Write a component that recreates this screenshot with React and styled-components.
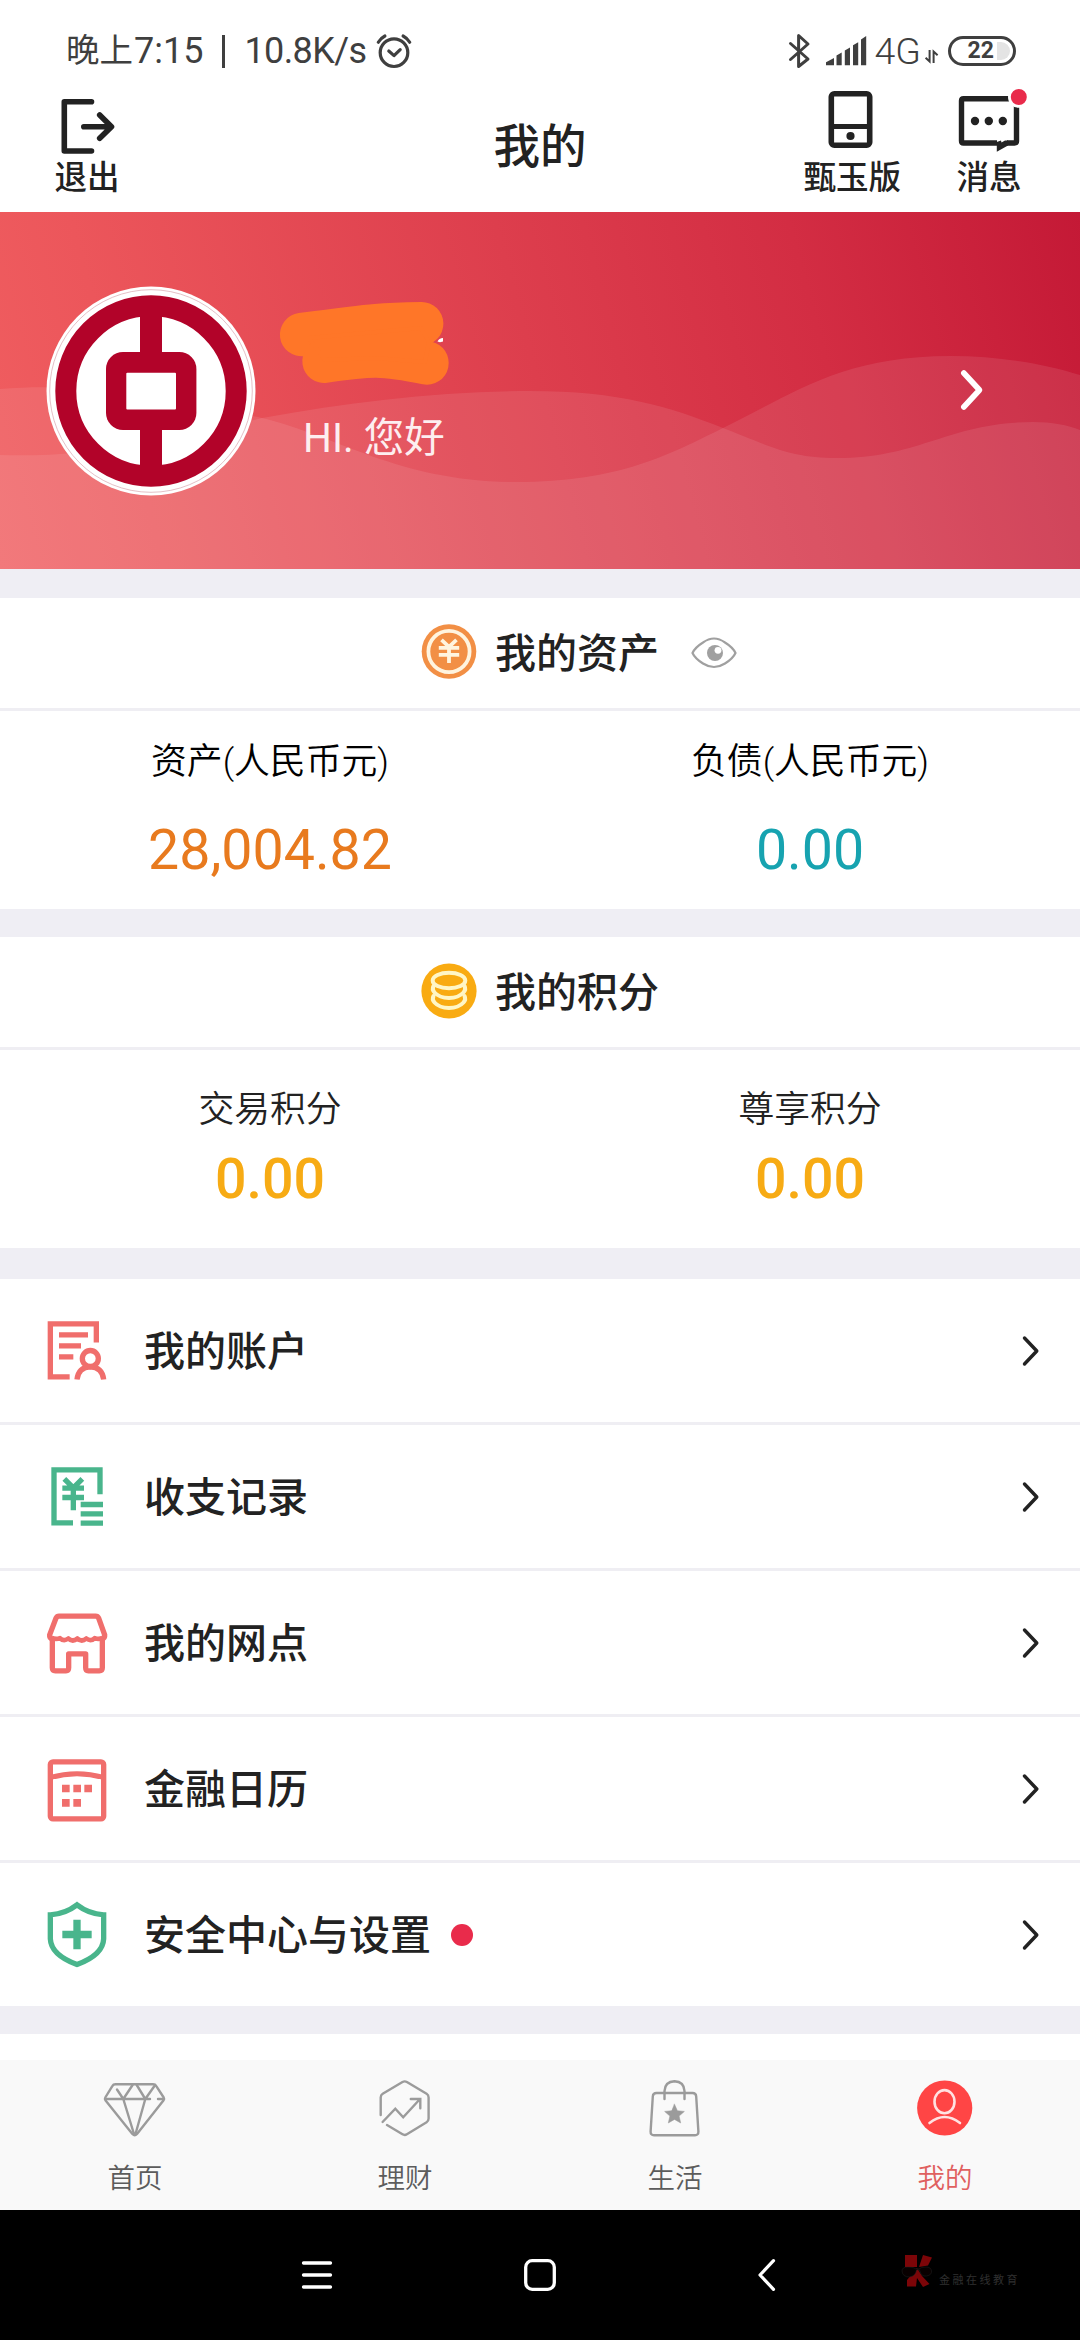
import React from 'react';
import styled, { createGlobalStyle } from 'styled-components';

const GlobalStyle = createGlobalStyle`
  * {
    box-sizing: border-box;
  }

  body {
    margin: 0;
    background: #fff;
    font-family: Roboto, 'Noto Sans CJK SC', sans-serif;
    color: #222;
  }

  svg {
    display: block;
    flex-shrink: 0;
    overflow: visible;
  }
`;

const Screen = styled.div`
  width: 1080px;
  height: 2340px;
  display: flex;
  flex-direction: column;
  background: #fff;
  overflow: hidden;
  white-space: nowrap;
`;

/* ---------- status bar ---------- */

const StatusBar = styled.div`
  height: 84px;
  padding: 18px 64px 0 66px;
  display: flex;
  justify-content: space-between;
  align-items: center;
  color: #3f3f3f;
`;

const StatusGroup = styled.div`
  display: flex;
  align-items: center;
  height: 40px;
`;

const StatusText = styled.span`
  font-size: ${props => props.$size || 35}px;
  font-weight: ${props => props.$weight || 400};
  line-height: 40px;
  letter-spacing: ${props => props.$spacing || 0}px;
  margin-left: ${props => props.$left || 0}px;
`;

const StatusDivider = styled.span`
  width: 3px;
  height: 33px;
  margin: 0 19px 0 19px;
  background: #3f3f3f;
`;

const Battery = styled.div`
  position: relative;
  width: 68px;
  height: 30px;
  margin-left: 10px;
  border: 3px solid #3f3f3f;
  border-radius: 15px;
  display: flex;
  align-items: center;
  justify-content: flex-end;
  padding-right: 3px;
  font-size: 23px;
  font-weight: 700;
  line-height: 24px;
`;

const BatteryRest = styled.span`
  width: 13px;
  height: 18px;
  margin-left: 3px;
  background: #e4e4e4;
  border-radius: 0 9px 9px 0;
`;

/* ---------- header ---------- */

const Header = styled.header`
  height: 128px;
  padding: 0 55px 0 51px;
  display: grid;
  grid-template-columns: 1fr auto 1fr;
`;

const HeaderSide = styled.div`
  display: flex;
  justify-content: ${props => (props.$right ? 'flex-end' : 'flex-start')};
  gap: 52px;
`;

const HeaderButton = styled.div`
  padding-top: 4px;
  display: flex;
  flex-direction: column;
  align-items: center;
  font-size: 32.5px;
  font-weight: 500;
  line-height: 40px;
`;

const Title = styled.h1`
  margin: 0;
  padding-left: 4px;
  font-size: 46.5px;
  font-weight: 500;
  line-height: 127px;
`;

/* ---------- banner ---------- */

const Banner = styled.section`
  position: relative;
  height: 357px;
  padding: 0 96px 0 46px;
  display: flex;
  align-items: center;
  background: linear-gradient(75deg, #f05e60 0%, #ec565b 14%, #dd3e4d 50%, #d32d43 75%, #c41936 100%);
`;

const BannerWaves = styled.svg`
  position: absolute;
  inset: 0;
`;

const BannerItem = styled.div`
  position: relative;
`;

const UserInfo = styled(BannerItem)`
  flex: 1;
  margin: -16px 0 0 23px;
`;

const Greeting = styled.div`
  padding: 20px 0 0 24px;
  font-size: 40.5px;
  line-height: 56px;
  color: #fdeef0;
`;

const BannerArrow = styled(BannerItem)`
  margin-top: -2px;
`;

/* ---------- cards ---------- */

const Gap = styled.div`
  height: ${props => props.$height}px;
  background: #efeef4;
`;

const CardHead = styled.div`
  height: 113px;
  border-bottom: 3px solid #efeef3;
  display: flex;
  align-items: center;
  justify-content: center;
`;

const CardTitle = styled.h2`
  margin: 2px 0 0 18px;
  font-size: 41px;
  font-weight: 500;
  line-height: 58px;
`;

const EyeSlot = styled.div`
  width: 0;
  padding-left: 32px;
  margin-right: -32px;
`;

const CardBody = styled.div`
  height: 198px;
  padding-top: ${props => props.$top}px;
  display: grid;
  grid-template-columns: 1fr 1fr;
`;

const Stat = styled.div`
  display: flex;
  flex-direction: column;
  align-items: center;
  gap: ${props => props.$gap}px;
`;

const StatLabel = styled.div`
  font-size: ${props => props.$size}px;
  font-weight: 350;
  line-height: 40px;
  color: ${props => props.$color};
`;

const StatValue = styled.div`
  font-size: 55.5px;
  font-weight: ${props => props.$weight || 400};
  line-height: 60px;
  color: ${props => props.$color};
`;

/* ---------- menu ---------- */

const MenuRow = styled.div`
  height: ${props => (props.$last ? 143 : 146)}px;
  padding: 0 41px 0 44px;
  border-bottom: ${props => (props.$last ? 0 : 3)}px solid #efeef3;
  display: flex;
  align-items: center;
`;

const MenuLabel = styled.span`
  margin: 2px 0 0 34px;
  font-size: 41px;
  font-weight: 500;
  line-height: 60px;
`;

const RedDot = styled.span`
  width: 22px;
  height: 22px;
  margin-left: 20px;
  border-radius: 50%;
  background: #e92b4b;
`;

const MenuArrow = styled.svg`
  margin-left: auto;
`;

/* ---------- bottom bars ---------- */

const TabBar = styled.nav`
  height: 150px;
  margin-top: 26px;
  display: grid;
  grid-template-columns: repeat(4, 1fr);
  background: #f9f9f9;
`;

const Tab = styled.div`
  padding-top: 18px;
  display: flex;
  flex-direction: column;
  align-items: center;
  gap: 21px;
  font-size: 27.5px;
  font-weight: 350;
  line-height: 40px;
  color: ${props => (props.$active ? '#e0605f' : '#5c5c5c')};
`;

const NavBar = styled.div`
  height: 130px;
  padding-left: 302px;
  display: flex;
  align-items: center;
  background: #000;
`;

const NavIcon = styled.svg`
  margin-left: ${props => props.$left || 0}px;
`;

const Watermark = styled.div`
  margin: -9px 0 0 127px;
  display: flex;
  align-items: flex-end;
  gap: 7px;
  font-size: 11px;
  line-height: 12px;
  letter-spacing: 2.5px;
  color: #303030;
`;

/* ---------- icons ---------- */

const AlarmIcon = () => (
  <svg width="36" height="36" viewBox="377 32 36 36" fill="none" stroke="#3f3f3f" strokeWidth="3.2" strokeLinecap="round" strokeLinejoin="round">
    <circle cx="395" cy="51.7" r="13.8" />
    <path d="M389.8 50l5.2 4.6 6.2-6M379.3 41.2q2.4-4 6.6-6.2M410.7 41.2q-2.4-4-6.6-6.2" />
  </svg>
);

const BluetoothIcon = () => (
  <svg width="21" height="36" viewBox="788 31 21 36" fill="none" stroke="#3f3f3f" strokeWidth="3" strokeLinejoin="round" strokeLinecap="round">
    <path d="M789.5 41.5L807 57l-9.4 7.5V33.5L807 42l-17.5 15.5" />
  </svg>
);

const SignalIcon = () => (
  <svg width="40" height="30" viewBox="825 33.5 40 30" fill="#3f3f3f">
    <path d="M825 62.7v-3l8-4.2v7.2zM835.5 62.7v-9.6l5.2-3v12.6zM843.8 62.7v-14.6l5.2-3v17.6zM852 62.7v-20l5.2-3v23zM860 62.7V37l5.2-3.4v29.1z" />
  </svg>
);

const DataIcon = () => (
  <svg width="13" height="13" viewBox="0 -5 13 13" fill="none" stroke="#3f3f3f" strokeWidth="2">
    <path d="M4.6 0v11.5L.6 7.8M8.6 13V1.5l4 3.7" />
  </svg>
);

const ExitIcon = () => (
  <svg width="72" height="70" viewBox="0 0 72 70" fill="none" stroke="#222" strokeWidth="5.6" strokeLinecap="round" strokeLinejoin="round">
    <path d="M40.5 13.8H13.3V63h27.2M32.8 38.7H60M48.7 27l11.8 11.7-11.8 11.6" />
  </svg>
);

const PhoneIcon = () => (
  <svg width="72" height="70" viewBox="0 0 72 70" fill="none" stroke="#222" strokeWidth="5.6">
    <rect x="15.3" y="5.8" width="38.4" height="51.4" rx="3" />
    <path d="M15 38.6h38" strokeWidth="5" />
    <circle cx="34.5" cy="48" r="4.1" fill="#222" stroke="none" />
  </svg>
);

const MessageIcon = () => (
  <svg width="72" height="70" viewBox="0 0 72 70">
    <path d="M44 55H10.5q-2 0-2-2V12.800q0-2 2-2h51q2 0 2 2V53q0 2-2 2H54" fill="none" stroke="#222" strokeWidth="5.4" />
    <path d="M43.800 54v9.800L55 57.400V52.500h-3l-3.500 2-.5-2z" fill="#222" />
    <g fill="#222">
      <circle cx="22" cy="33" r="4.2" />
      <circle cx="35.8" cy="33" r="4.2" />
      <circle cx="49.8" cy="33" r="4.2" />
    </g>
    <circle cx="65.8" cy="9" r="9.4" fill="#e92b4b" stroke="#fff" strokeWidth="2.8" />
  </svg>
);

const Avatar = () => (
  <svg width="210" height="210" viewBox="0 0 210 210">
    <circle cx="105" cy="105" r="104.5" fill="#fff" />
    <circle cx="105" cy="105" r="101.3" fill="none" stroke="#d9a5ad" strokeWidth=".7" />
    <circle cx="105" cy="105" r="85.2" fill="none" stroke="#b20329" strokeWidth="21" />
    <path d="M94 25h22v160H94z" fill="#b20329" />
    <rect x="60" y="66" width="90.4" height="78" rx="17" fill="#b20329" />
    <rect x="80.3" y="86.7" width="49.7" height="36.7" rx="1" fill="#fff" />
  </svg>
);

// orange marker strokes hiding the user name
const NameMask = () => (
  <svg width="172" height="90" viewBox="0 0 172 90">
    <g fill="#ff7628" stroke="#ff7628" strokeWidth="43.4" strokeLinecap="round" strokeLinejoin="round">
      <path d="M22.6 34.6Q80 27 97 25.6T142.7 23.7" fill="none" />
      <path d="M45 61.3Q80 56 97 56T148 63" fill="none" />
      <path d="M30 38L142 28l8 14-4 20-50-4-50 2z" strokeWidth="4" />
    </g>
    <path d="M158.500 41.500q1.500-3.500 5.500-3.500v3.500l-3 .800z" fill="#fff" />
  </svg>
);

const YuanCoin = () => (
  <svg width="56" height="58" viewBox="0 0 56 58">
    <circle cx="28" cy="27.5" r="27.3" fill="#f28f45" />
    <circle cx="28" cy="27.5" r="20.6" fill="none" stroke="#fff4df" strokeWidth="3.8" />
    <path d="M20.5 15.8l7.5 7 7.5-7M28 22v17M17.8 23.8h20.4M17.8 30.8h20.4" fill="none" stroke="#fff4df" strokeWidth="3.8" />
  </svg>
);

const CoinStack = () => (
  <svg width="56" height="58" viewBox="0 0 56 58">
    <circle cx="28" cy="28" r="27.6" fill="#f9ab12" />
    <g fill="none" stroke="#fff6c6" strokeWidth="4" strokeLinecap="round">
      <ellipse cx="28" cy="17.500" rx="16.300" ry="7.800" />
      <path d="M12.500 23q-1.800 3.500 1 6.500 5 5.500 14.500 5.500t14.500-5.500q2.800-3 1-6.500" />
      <path d="M12.500 33q-1.800 3.500 1 6.500 5 5.500 14.500 5.500t14.500-5.500q2.800-3 1-6.500" />
    </g>
  </svg>
);

const EyeIcon = () => (
  <svg width="46" height="34" viewBox="0 0 46 34">
    <path d="M1.500 17Q4 11.500 12 6.500 23-1.500 34 6.500q8 5 10.500 10.500Q42 22.500 34 27.500 23 34.500 12 27.500 4 22.500 1.500 17z" fill="none" stroke="#a0a0a0" strokeWidth="2.200" />
    <circle cx="24" cy="17" r="8" fill="#a0a0a0" />
    <circle cx="27" cy="14.300" r="3.400" fill="#fff" />
  </svg>
);

const RED = '#f06e6c';
const GREEN = '#49b58c';

const AccountIcon = () => (
  <svg width="66" height="72" viewBox="72 133.5 198 216" fill="none" stroke={RED} strokeWidth="16">
    <path d="M229 216v-56H91v159h58" />
    <path d="M117 193h87M117 226h66M117 259h43" />
    <circle cx="211" cy="264" r="24" />
    <path d="M171 327q4-37 40-38 36 1 40 38" />
  </svg>
);

const RecordIcon = () => (
  <svg width="66" height="72" viewBox="72 571.5 198 216" fill="none" stroke={GREEN} strokeWidth="16">
    <path d="M240 671v-73H102v159h57" />
    <path d="M133 625l27 27 27-27M160 648v71M127 653h65M127 681h65" />
    <path d="M182 702h67M182 730h67M182 758h67" />
  </svg>
);

const BranchIcon = () => (
  <svg width="66" height="72" viewBox="72 1009.5 198 216" fill="none" stroke={RED} strokeWidth="16" strokeLinejoin="round">
    <path d="M97 1106v86q0 9 9 9h32q8 0 8-9v-42h51v42q0 9 8 9h33q9 0 9-9v-86" />
    <path d="M97 1106q-9-3-8-13l19-50q3-6 9-6h110q6 0 9 6l18 50q1 10-8 13" />
    <path d="M95 1102q12 6 25 1 12 11 25 1 13 12 27 0 13 12 27 0 13 10 25-1 13 5 24-1" strokeWidth="14" />
  </svg>
);

const CalendarIcon = () => (
  <svg width="66" height="72" viewBox="72 157.5 198 216" fill="none" stroke={RED} strokeWidth="16">
    <rect x="91" y="184" width="160" height="171" rx="8" />
    <path d="M91 231q80-23 160 0" strokeWidth="15" />
    <path d="M126 264h23M160 264h23M193 264h23M126 307h23M160 307h23" strokeWidth="23" />
  </svg>
);

const ShieldIcon = () => (
  <svg width="66" height="72" viewBox="72 595.5 198 216" fill="none" stroke={GREEN} strokeWidth="16">
    <path d="M171 613q35 27 80 30v72q-2 48-80 77-78-29-80-77v-72q45-3 80-30z" />
    <path d="M171 658v88M127 702h88" strokeWidth="22" />
  </svg>
);

const HomeTabIcon = () => (
  <svg width="64" height="60" viewBox="0 0 64 60" fill="none" stroke="#9b9b9b" strokeWidth="2.4" strokeLinecap="round" strokeLinejoin="round">
    <path d="M12.500 6.300H50q2.300 0 3.300 1.800l7.400 11.400q.9 1.500-.1 2.700L34 56q-2.300 2.300-4.600 0L2.400 22.200q-1-1.200-.1-2.700L9.300 8.100q1-1.800 3.200-1.800z" />
    <path d="M3 21h44M55 21h6M14 11.500L20.300 21l9.300-14M33.700 7l8.600 14 9.500-13.500M20.300 21L31 56M42.300 21L32.500 56" />
  </svg>
);

const WealthTabIcon = () => (
  <svg width="64" height="60" viewBox="0 0 64 60" fill="none" stroke="#9b9b9b" strokeWidth="2.4" strokeLinecap="round" strokeLinejoin="round">
    <path d="M7.700 37V19.500q0-2.500 2-3.700L29.500 4q2.200-1.200 4.400 0l19.700 11.800q2 1.200 2 3.700v21q0 2.500-2 3.700L33.900 56.300q-2.200 1.300-4.400 0L14 47" />
    <path d="M9.600 44l12.700-13.300 7.900 8.600L46.800 21.300M37.800 21h9.500v9.300" strokeLinejoin="miter" />
  </svg>
);

const LifeTabIcon = () => (
  <svg width="64" height="60" viewBox="0 0 64 60" fill="none" stroke="#9b9b9b" strokeWidth="2.4" strokeLinecap="round" strokeLinejoin="round">
    <path d="M13.500 15h36q3.500 0 3.700 3.500l2.200 35q.1 3.700-3.400 3.700H11q-3.500 0-3.400-3.700l2.200-35Q10 15 13.500 15z" />
    <path d="M21.500 21V13q.5-9.300 10-9.700 9.500.4 10 9.700v8" />
    <path d="M31.500 26.200l2.900 6.500 7 .7-5.300 4.700 1.600 6.900-6.200-3.600-6.200 3.600 1.600-6.900-5.300-4.700 7-.7z" fill="#9b9b9b" strokeWidth=".5" />
  </svg>
);

const MineTabIcon = () => (
  <svg width="64" height="60" viewBox="0 0 64 60" fill="none" stroke="#ffe1e1" strokeWidth="2.600" strokeLinecap="round">
    <circle cx="31.700" cy="30" r="27.600" fill="#ff4545" stroke="none" />
    <ellipse cx="31.500" cy="23.700" rx="10" ry="11.600" />
    <path d="M16.500 45q15-12 30.500 0" />
  </svg>
);

const WatermarkLogo = () => (
  <svg width="30" height="32" viewBox="0 0 30 32">
    <path d="M3 0h12v12H3zM21 0l9 2.500-4 8-9 1.500zM15 13l5 8 7.500 8-6.500 3-6-9-1 8.500H5V25z" fill="#7c0508" />
    <path d="M0 16q0-4 6-4t8 2q1-1 3 0 2-2 7-2t5.500 4-5 5-7-6q-1-1-3 0-1 6-7 7-7 0-7.500-6z" fill="#080000" stroke="#222" strokeWidth=".5" />
  </svg>
);

const menu = [
  { label: '我的账户', Icon: AccountIcon },
  { label: '收支记录', Icon: RecordIcon },
  { label: '我的网点', Icon: BranchIcon },
  { label: '金融日历', Icon: CalendarIcon },
  { label: '安全中心与设置', Icon: ShieldIcon, dot: true },
];

const tabs = [
  { label: '首页', Icon: HomeTabIcon },
  { label: '理财', Icon: WealthTabIcon },
  { label: '生活', Icon: LifeTabIcon },
  { label: '我的', Icon: MineTabIcon, active: true },
];

const App = () => {
  return (
    <Screen lang="zh-CN">
      <GlobalStyle />

      <StatusBar>
        <StatusGroup>
          <StatusText $size={33.5}>晚上</StatusText>
          <StatusText $size={36} $left={1}>7:15</StatusText>
          <StatusDivider />
          <StatusText $size={36} $spacing={-0.6}>10.8K/s</StatusText>
          <StatusText $left={10}><AlarmIcon /></StatusText>
        </StatusGroup>
        <StatusGroup>
          <BluetoothIcon />
          <StatusText $left={16}><SignalIcon /></StatusText>
          <StatusText $size={37.5} $weight={300} $left={9}>4G</StatusText>
          <StatusText $left={4}><DataIcon /></StatusText>
          <Battery>
            22
            <BatteryRest />
          </Battery>
        </StatusGroup>
      </StatusBar>

      <Header>
        <HeaderSide>
          <HeaderButton>
            <ExitIcon />
            退出
          </HeaderButton>
        </HeaderSide>
        <Title>我的</Title>
        <HeaderSide $right>
          <HeaderButton>
            <PhoneIcon />
            甄玉版
          </HeaderButton>
          <HeaderButton>
            <MessageIcon />
            消息
          </HeaderButton>
        </HeaderSide>
      </Header>

      <Banner>
        <BannerWaves width="1080" height="357" viewBox="0 0 1080 357" fill="#fff" fillOpacity=".09">
          <path d="M0 177C90 170 170 186 262 206C340 225 400 270 516 270C620 270 670 242 723 216C790 184 840 144 950 144C1000 144 1045 152 1080 163V357H0z" />
          <path d="M0 243C90 246 170 228 262 206C350 190 440 179 530 179C620 179 670 195 723 216C770 234 790 246 837 246C920 246 950 210 1033 210C1052 210 1068 213 1080 218V357H0z" />
        </BannerWaves>
        <BannerItem>
          <Avatar />
        </BannerItem>
        <UserInfo>
          <NameMask />
          <Greeting>HI. 您好</Greeting>
        </UserInfo>
        <BannerArrow>
          <svg width="24" height="40" viewBox="0 0 24 40" fill="none" stroke="#fff" strokeWidth="5.600" strokeLinecap="round" strokeLinejoin="round">
            <path d="M3.800 3L19.500 20 3.800 37" />
          </svg>
        </BannerArrow>
      </Banner>

      <Gap $height={29} />
      <CardHead>
        <YuanCoin />
        <CardTitle>我的资产</CardTitle>
        <EyeSlot>
          <EyeIcon />
        </EyeSlot>
      </CardHead>
      <CardBody $top={31}>
        <Stat $gap={39}>
          <StatLabel $size={35.8} $color="#000">资产(人民币元)</StatLabel>
          <StatValue $color="#e87a1e">28,004.82</StatValue>
        </Stat>
        <Stat $gap={39}>
          <StatLabel $size={35.8} $color="#000">负债(人民币元)</StatLabel>
          <StatValue $color="#17a3b0">0.00</StatValue>
        </Stat>
      </CardBody>

      <Gap $height={28} />
      <CardHead>
        <CoinStack />
        <CardTitle>我的积分</CardTitle>
      </CardHead>
      <CardBody $top={40}>
        <Stat $gap={20}>
          <StatLabel $size={35.8} $color="#222">交易积分</StatLabel>
          <StatValue $color="#f7ab14" $weight={500}>0.00</StatValue>
        </Stat>
        <Stat $gap={20}>
          <StatLabel $size={35.8} $color="#222">尊享积分</StatLabel>
          <StatValue $color="#f7ab14" $weight={500}>0.00</StatValue>
        </Stat>
      </CardBody>

      <Gap $height={31} />
      {menu.map(({ label, Icon, dot }, i) => (
        <MenuRow key={label} $last={i === menu.length - 1}>
          <Icon />
          <MenuLabel>{label}</MenuLabel>
          {dot && <RedDot />}
          <MenuArrow width="17" height="30" viewBox="0 0 17 30" fill="none" stroke="#222" strokeWidth="3.4" strokeLinecap="round" strokeLinejoin="round">
            <path d="M2.500 2L14.800 15 2.500 28" />
          </MenuArrow>
        </MenuRow>
      ))}
      <Gap $height={28} />

      <TabBar>
        {tabs.map(({ label, Icon, active }) => (
          <Tab key={label} $active={active}>
            <Icon />
            {label}
          </Tab>
        ))}
      </TabBar>

      <NavBar>
        <NavIcon width="30" height="28" viewBox="0 0 30 28" stroke="#fff" strokeWidth="3.3" strokeLinecap="round">
          <path d="M1.500 2h27M1.500 14h27M1.500 26h27" />
        </NavIcon>
        <NavIcon $left={192} width="32" height="32" viewBox="0 0 32 32" fill="none" stroke="#fff" strokeWidth="3.3">
          <rect x="1.7" y="1.7" width="28.6" height="28.6" rx="6.5" />
        </NavIcon>
        <NavIcon $left={202} width="17" height="32" viewBox="0 0 17 32" fill="none" stroke="#fff" strokeWidth="3.2" strokeLinecap="round" strokeLinejoin="round">
          <path d="M15.500 1.700L2 16l13.500 14.300" />
        </NavIcon>
        <Watermark>
          <WatermarkLogo />
          金融在线教育
        </Watermark>
      </NavBar>
    </Screen>
  );
};

export default App;
